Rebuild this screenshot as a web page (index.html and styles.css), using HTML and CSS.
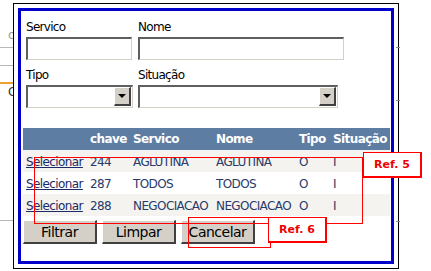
FILE: index.html
```html
<!DOCTYPE html>
<html lang="pt">
<head>
  <meta charset="UTF-8" />
  <title>Pesquisa de Servico</title>
  <link rel="stylesheet" href="styles.css">
</head>
<body>
  <!-- page behind the dialog, only its edges show -->
  <div class="page">
    <div class="page-line l1"></div>
    <div class="page-line l2"></div>
    <div class="page-line orange"></div>
    <div class="page-line l3"></div>
    <span class="page-txt t1">o</span>
    <span class="page-txt t2">G</span>
  </div>

  <div class="dialog">
    <div class="dialog-inner">
      <form class="filters">
        <label class="field">
          <span>Servico</span>
          <input type="text" class="txt small" />
        </label>
        <label class="field">
          <span>Nome</span>
          <input type="text" class="txt wide" />
        </label>
        <label class="field">
          <span>Tipo</span>
          <div class="combo small"><div class="combo-btn"><i></i></div></div>
        </label>
        <label class="field">
          <span>Situação</span>
          <div class="combo medium"><div class="combo-btn"><i></i></div></div>
        </label>
      </form>

      <table class="grid">
        <thead>
          <tr>
            <th class="c-sel"></th>
            <th class="c-key">chave</th>
            <th class="c-svc">Servico</th>
            <th class="c-name">Nome</th>
            <th class="c-type">Tipo</th>
            <th class="c-sit">Situação</th>
          </tr>
        </thead>
        <tbody>
          <tr class="alt">
            <td><a href="#">Selecionar</a></td>
            <td>244</td><td>AGLUTINA</td><td>AGLUTINA</td><td>O</td><td>I</td>
          </tr>
          <tr>
            <td><a href="#">Selecionar</a></td>
            <td>287</td><td>TODOS</td><td>TODOS</td><td>O</td><td>I</td>
          </tr>
          <tr class="alt">
            <td><a href="#">Selecionar</a></td>
            <td>288</td><td>NEGOCIACAO</td><td>NEGOCIACAO</td><td>O</td><td>I</td>
          </tr>
        </tbody>
      </table>

      <div class="buttons">
        <button type="button">Filtrar</button>
        <button type="button">Limpar</button>
        <button type="button">Cancelar</button>
      </div>
    </div>

    <span class="gap-line g1"></span>
    <span class="gap-line g2"></span>
    <span class="gap-line g3"></span>

    <!-- annotation marks drawn over the screenshot -->
    <div class="mark rows"></div>
    <div class="mark tag tag5">Ref. 5</div>
    <div class="mark cancel"></div>
    <div class="mark tag tag6">Ref. 6</div>
  </div>
</body>
</html>
```

FILE: styles.css
```css
body {
  margin: 0;
  width: 431px;
  height: 271px;
  background: #fff;
  font-family: "DejaVu Sans", Tahoma, sans-serif;
  font-size: 12px;
  color: #000;
  position: relative;
  overflow: hidden;
}
.page-line {
  position: absolute;
  left: 0;
  width: 13px;
  height: 1px;
  background: #b8b8b8;
}
.page-line.l1 { top: 47px; }
.page-line.l2 { top: 65px; }
.page-line.orange { top: 82px; height: 2px; background: #f0a030; }
.page-line.l3 { top: 220px; }
.page-txt {
  position: absolute;
  left: 8px;
  font-size: 12px;
  color: #999;
}
.page-txt.t1 { top: 28px; }
.page-txt.t2 { top: 85px; color: #333; }

.dialog {
  position: absolute;
  left: 13px;
  top: 3px;
  width: 376px;
  height: 256px;
  padding: 4px;
  border: 1px solid #000;
  background: #fff;
}
.dialog-inner {
  border: 3px solid #0000cc;
  padding: 9px 0 0 2px;
  box-sizing: border-box;
  height: 256px;
}
.gap-line {
  position: absolute;
  left: 382px;
  width: 4px;
  height: 1px;
  background: #888;
}
.gap-line.g1 { top: 43px; }
.gap-line.g2 { top: 96px; }
.gap-line.g3 { top: 217px; }

.filters {
  display: grid;
  grid-template-columns: 107px 210px;
  column-gap: 5px;
  row-gap: 8px;
  padding-left: 3px;
  margin: 0;
}
.field {
  display: flex;
  flex-direction: column;
  gap: 3px;
  letter-spacing: -0.7px;
}
.txt {
  height: 23px;
  box-sizing: border-box;
  margin: 0;
  border-style: solid;
  border-width: 2px 1px 1px 2px;
  border-color: #5f5f5f #d4d0c8 #d4d0c8 #5f5f5f;
  background: #fff;
}
.txt.small { width: 106px; }
.txt.wide { width: 206px; }
.combo {
  height: 23px;
  box-sizing: border-box;
  border-style: solid;
  border-width: 2px 1px 1px 2px;
  border-color: #5f5f5f #d4d0c8 #d4d0c8 #5f5f5f;
  background: #fff;
  display: flex;
  justify-content: flex-end;
}
.combo.small { width: 107px; }
.combo.medium { width: 200px; }
.combo-btn {
  width: 17px;
  height: 19px;
  margin: 0 1px 0 0;
  box-sizing: border-box;
  background: #d4d0c8;
  border-style: solid;
  border-width: 1px 2px 2px 1px;
  border-color: #fff #404040 #404040 #fff;
  display: flex;
  align-items: center;
  justify-content: center;
}
.combo-btn i {
  width: 0;
  height: 0;
  border-left: 4px solid transparent;
  border-right: 4px solid transparent;
  border-top: 4px solid #000;
}

.grid {
  margin-top: 20px;
  border-collapse: collapse;
  width: 367px;
  color: #283a6a;
  letter-spacing: -0.6px;
}
.grid th {
  background: #5d7da3;
  color: #fff;
  font-weight: bold;
  text-align: left;
  height: 22px;
  padding: 0 0 0 3px;
}
.grid td {
  height: 21px;
  padding: 1px 0 0 3px;
  white-space: nowrap;
}
.grid tr.alt td { background: #f4f3ef; }
.grid a { color: #1b2a66; }
.c-sel { width: 61px; }
.c-key { width: 40px; }
.c-svc { width: 80px; }
.c-name { width: 80px; }
.c-type { width: 31px; }

.buttons {
  display: flex;
  gap: 5px;
  margin-top: 4px;
}
.buttons button {
  width: 74px;
  height: 24px;
  font-family: "DejaVu Sans", Tahoma, sans-serif;
  font-size: 14px;
  letter-spacing: -0.5px;
  color: #000;
  background: #d4d0c8;
  border-style: solid;
  border-width: 1px 2px 2px 1px;
  border-color: #fff #404040 #404040 #fff;
  padding: 0;
}

.mark {
  position: absolute;
  border: 1px solid #f00;
  box-sizing: border-box;
}
.rows { left: 20px; top: 153px; width: 329px; height: 67px; }
.cancel { left: 174px; top: 213px; width: 83px; height: 31px; }
.tag {
  background: #fff;
  color: #e00;
  font-family: "DejaVu Sans", Tahoma, sans-serif;
  font-weight: bold;
  font-size: 11px;
  display: flex;
  align-items: center;
  justify-content: center;
  border-width: 1px 2px 2px 1px;
}
.tag5 { left: 349px; top: 148px; width: 59px; height: 26px; }
.tag6 { left: 254px; top: 213px; width: 59px; height: 26px; }
```
